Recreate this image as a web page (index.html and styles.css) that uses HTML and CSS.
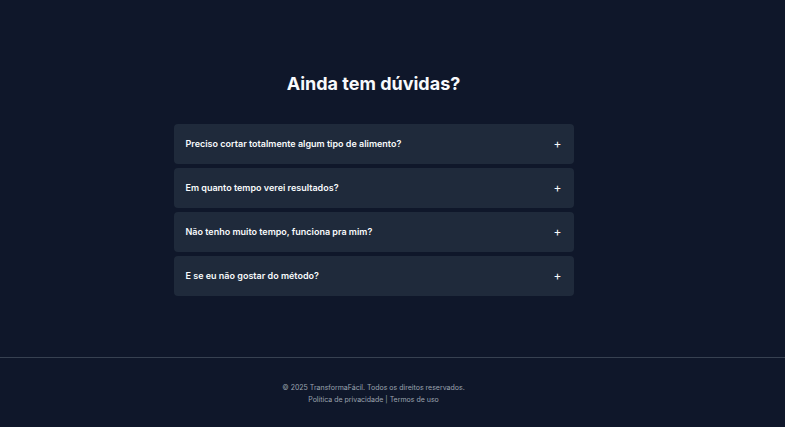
FILE: index.html
```html
<!DOCTYPE html>
<html lang="pt-BR">
<head>
<meta charset="utf-8">
<meta name="viewport" content="width=device-width, initial-scale=1">
<title>TransformaFácil</title>
<link rel="stylesheet" href="styles.css">
</head>
<body>
<main class="faq">
  <h2 class="faq-title">Ainda tem dúvidas?</h2>
  <div class="faq-list">
    <button class="faq-item" type="button" aria-expanded="false"><span>Preciso cortar totalmente algum tipo de alimento?</span><span class="faq-icon">+</span></button>
    <button class="faq-item" type="button" aria-expanded="false"><span>Em quanto tempo verei resultados?</span><span class="faq-icon">+</span></button>
    <button class="faq-item" type="button" aria-expanded="false"><span>Não tenho muito tempo, funciona pra mim?</span><span class="faq-icon">+</span></button>
    <button class="faq-item" type="button" aria-expanded="false"><span>E se eu não gostar do método?</span><span class="faq-icon">+</span></button>
  </div>
</main>
<footer class="footer">
  <p>© 2025 TransformaFácil. Todos os direitos reservados.</p>
  <p><a href="#">Política de privacidade</a> | <a href="#">Termos de uso</a></p>
</footer>
</body>
</html>
```
FILE: styles.css
```css
* {
  box-sizing: border-box;
  margin: 0;
}

body {
  min-height: 100vh;
  background: #0f172a;
  color: #f8fafc;
  font-family: Inter, "Liberation Sans", sans-serif;
}

.faq {
  padding: 72px 38px 61px 0;
}

.faq-title {
  margin-bottom: 28px;
  font-size: 18px;
  line-height: 24px;
  font-weight: 700;
  text-align: center;
}

.faq-list {
  display: grid;
  gap: 4px;
  max-width: 400px;
  margin: 0 auto;
}

.faq-item {
  display: flex;
  align-items: center;
  justify-content: space-between;
  min-height: 40px;
  padding: 8px 12px;
  border: 0;
  border-radius: 4px;
  background: #1f2a3b;
  color: inherit;
  font: 600 9px/16px Inter, "Liberation Sans", sans-serif;
  text-align: left;
  cursor: pointer;
}

.faq-icon {
  font-size: 12px;
  font-weight: 400;
}

.footer {
  padding: 24px 38px 20px 0;
  border-top: 1px solid #374151;
  color: #9ca3af;
  font-size: 7px;
  line-height: 12px;
  text-align: center;
}

.footer a {
  color: inherit;
  text-decoration: none;
}
```
